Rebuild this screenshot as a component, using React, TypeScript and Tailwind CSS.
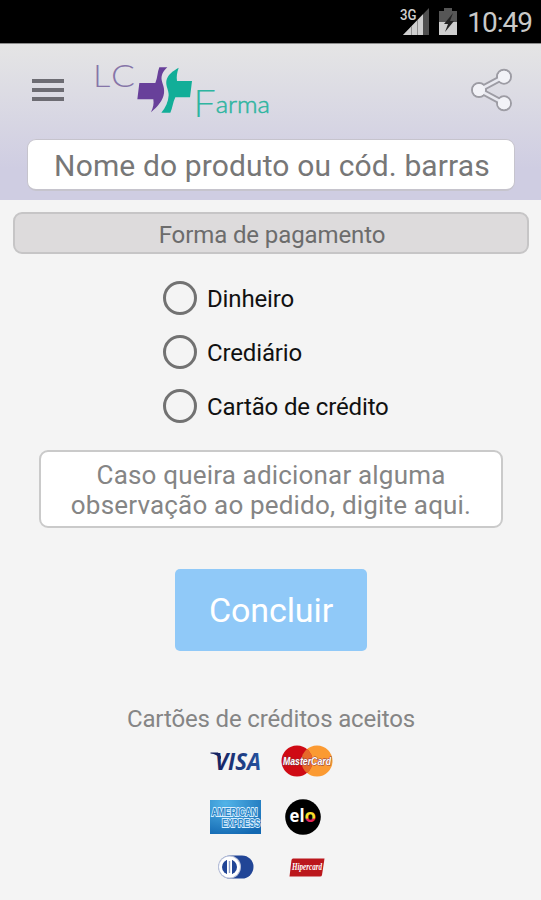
import { useState } from "react";

const payments = ["Dinheiro", "Crediário", "Cartão de crédito"];

function StatusBar() {
  return (
    <div className="flex h-[43px] shrink-0 items-start justify-end bg-black pr-[9px]">
      <svg className="mt-[6px] h-[30px] w-[30px] overflow-visible" viewBox="0 0 30 30">
        <path d="M3 29 29 2V29Z" fill="#4f4f4f" />
        <path d="M3 29 23 8.200V29Z" fill="#cfcfcf" />
        <path d="M11.500 20v9M17.500 14v15" stroke="#8f8f8f" strokeWidth="1" />
        <text x="0" y="13.500" fontFamily="Roboto, sans-serif" fontSize="14.500" fontWeight="500" fill="#d0d0d0" stroke="#000" strokeWidth="2" paintOrder="stroke" textLength="16.500" lengthAdjust="spacingAndGlyphs">3G</text>
      </svg>
      <svg className="mt-[7px] ml-[9px] h-[29px] w-[19px]" viewBox="0 0 19 29">
        <path d="M5 1h8v3h5v11H0V4h5Z" fill="#565656" />
        <path d="M0 15h18v13H0Z" fill="#cfcfcf" />
        <path d="m14 6-9 11h4l-3 8 9-11h-4Z" fill="#222" />
      </svg>
      <span className="mt-[6px] ml-[9px] text-[28px] leading-[33px] tracking-[-1px] text-[#c9c9c9]">10:49</span>
    </div>
  );
}

function Logo() {
  return (
    <svg className="h-[65px] w-[187px] overflow-visible" viewBox="270 51 561 195">
      <g fontFamily="Lato, sans-serif" fontWeight="300">
        <text x="279" y="140" fontSize="94" fill="#8675a8" textLength="52" lengthAdjust="spacingAndGlyphs">L</text>
        <text x="333" y="140" fontSize="94" fill="#8675a8" textLength="72" lengthAdjust="spacingAndGlyphs">C</text>
        <text x="580" y="231" fontSize="110" fill="#2eb5a0" textLength="68" lengthAdjust="spacingAndGlyphs">F</text>
        <text x="647" y="219" fontSize="72" fill="#2eb5a0" stroke="#2eb5a0" strokeWidth="1.500" textLength="163" lengthAdjust="spacingAndGlyphs">arma</text>
      </g>
      <path d="M478 82h24c-13 12-19 24-17 38 3 14 9 22 7 40-3 22-19 40-39 57 7-14 9-26 7-39h-48l6-49h48c7-16 6-32 12-47Z" fill="#68409a" />
      <path d="M536 83c-5 14-7 27-5 40h45l-6 49h-44c-8 16-8 32-15 46h-27c13-15 21-33 22-52 0-17-9-27-7-43 3-18 19-30 37-40Z" fill="#12ae98" />
    </svg>
  );
}

function Header() {
  return (
    <header className="flex h-[157px] shrink-0 flex-col border-t border-[#8c8c8c] bg-linear-to-b from-[#e5e5e5] to-[#cfcde2] to-80%">
      <div className="flex h-[95px] shrink-0 items-start">
        <button aria-label="Menu" className="mt-[35px] ml-8 flex w-8 flex-col gap-[5px]">
          <span className="h-1 bg-[#6d6c73]" />
          <span className="h-1 bg-[#6d6c73]" />
          <span className="h-1 bg-[#6d6c73]" />
        </button>
        <div className="mt-[13px] ml-[26px]">
          <Logo />
        </div>
        <button aria-label="Compartilhar" className="mt-[23px] mr-7 ml-auto">
          <svg className="h-[46px] w-[43px]" viewBox="90 51 129 138">
            <g fill="#f2f2f7" stroke="#9d9ca4">
              <path d="M192 80 117 120 192 160" fill="none" strokeWidth="19" />
              <circle cx="192" cy="80" r="21" strokeWidth="6" />
              <circle cx="117" cy="120" r="21" strokeWidth="6" />
              <circle cx="192" cy="160" r="21" strokeWidth="6" />
              <path d="M192 80 117 120 192 160" fill="none" stroke="#e9e9f0" strokeWidth="8" />
            </g>
            <g fill="#f2f2f7">
              <circle cx="192" cy="80" r="18" />
              <circle cx="117" cy="120" r="18" />
              <circle cx="192" cy="160" r="18" />
            </g>
          </svg>
        </button>
      </div>
      <div className="mr-[26px] ml-[27px] flex h-[52px] items-center justify-center rounded-[9px] border border-b-2 border-[#c6c4cd] bg-white">
        <span className="pt-[2px] pl-[2px] text-[30px] leading-9 tracking-[0.13px] whitespace-nowrap text-[#777]">Nome do produto ou cód. barras</span>
      </div>
    </header>
  );
}

function Visa() {
  return (
    <svg className="h-[19px] w-[52px] overflow-visible" viewBox="0 0 52 19">
      <defs>
        <linearGradient id="visa">
          <stop offset="0" stopColor="#15205f" />
          <stop offset="1" stopColor="#2352a0" />
        </linearGradient>
      </defs>
      <path d="M.5.500h7.500l3 4v3Q7 2 .5 1.500Z" fill="#15205f" />
      <text x="5" y="17.500" fontFamily="Open Sans, sans-serif" fontSize="23" fontWeight="700" fontStyle="italic" fill="url(#visa)" textLength="46" lengthAdjust="spacingAndGlyphs">VISA</text>
    </svg>
  );
}

function MasterCard() {
  return (
    <svg className="h-8 w-[52px] overflow-visible" viewBox="0 0 52 32">
      <circle cx="36" cy="16" r="15.500" fill="#fb9a32" />
      <circle cx="16" cy="16" r="15.500" fill="#cf0a14" />
      <path d="M26 4a15.500 15.500 0 0 1 0 24 15.500 15.500 0 0 1 0-24" fill="#e6692a" />
      <text x="2" y="20" fontFamily="Liberation Sans, sans-serif" fontSize="11" fontWeight="700" fontStyle="italic" fill="#fff" stroke="#8b3440" strokeWidth="1" paintOrder="stroke" textLength="48" lengthAdjust="spacingAndGlyphs">MasterCard</text>
    </svg>
  );
}

function Amex() {
  return (
    <svg className="h-[34px] w-[51px] overflow-visible" viewBox="0 0 51 34">
      <defs>
        <radialGradient id="amex" cx=".3" cy=".1" r="1">
          <stop offset="0" stopColor="#52b4e8" />
          <stop offset="1" stopColor="#1268b2" />
        </radialGradient>
      </defs>
      <path d="M0 0h51v34H0Z" fill="url(#amex)" />
      <g fontFamily="Liberation Sans, sans-serif" fontSize="11" fontWeight="700" fill="#2a86c8" stroke="#d8efff" strokeWidth="1.800" paintOrder="stroke">
        <text x="1.500" y="16" textLength="46" lengthAdjust="spacingAndGlyphs">AMERICAN</text>
        <text x="12" y="27" textLength="38" lengthAdjust="spacingAndGlyphs">EXPRESS</text>
      </g>
    </svg>
  );
}

function Elo() {
  return (
    <svg className="h-9 w-9 overflow-visible" viewBox="0 0 36 36">
      <defs>
        <linearGradient id="elo" x2="0" y2="1">
          <stop offset=".62" stopColor="#f5e12c" />
          <stop offset=".68" stopColor="#e4245c" />
        </linearGradient>
      </defs>
      <circle cx="18" cy="18" r="17.800" fill="#000" />
      <g fontFamily="Open Sans, sans-serif" fontSize="18" fontWeight="700">
        <text x="4.500" y="23" fill="#fff" textLength="15" lengthAdjust="spacingAndGlyphs">el</text>
        <text x="19.500" y="23" fill="url(#elo)" textLength="11.500" lengthAdjust="spacingAndGlyphs">o</text>
      </g>
    </svg>
  );
}

function Diners() {
  return (
    <svg className="h-[24px] w-[36px]" viewBox="0 0 36 24">
      <rect x=".5" y=".5" width="35" height="23" rx="11.500" fill="#214596" />
      <circle cx="11.500" cy="12" r="11.500" fill="#b9c1da" />
      <circle cx="11.500" cy="12" r="10.500" fill="#fff" />
      <circle cx="11.500" cy="12" r="7.500" fill="#214596" />
      <path d="M9 4h5v16H9Z" fill="#fff" />
      <path d="M10.800 6h1.400v12h-1.400Z" fill="#8fa0c8" />
    </svg>
  );
}

function Hipercard() {
  return (
    <svg className="h-[19px] w-[36px] overflow-visible" viewBox="0 0 36 19">
      <path d="M4 .5h31.500L33 17q-.3 1.500-2 1.500H.500L2.500 2Q2.700.500 4 .500Z" fill="#bb171c" />
      <text x="3" y="12" fontFamily="Liberation Serif, serif" fontSize="9.500" fontWeight="700" fontStyle="italic" fill="#fff" textLength="30" lengthAdjust="spacingAndGlyphs">Hipercard</text>
    </svg>
  );
}

export default function App() {
  const [payment, setPayment] = useState<string | null>(null);

  return (
    <div className="flex h-[900px] w-[541px] flex-col overflow-hidden bg-[#f4f4f4] font-[Roboto,sans-serif]">
      <StatusBar />
      <Header />

      <main className="flex flex-col items-center pl-px">
        <h1 className="mt-3 flex h-[42px] w-[516px] items-center justify-center rounded-[9px] border-2 border-[#c6c5c6] bg-[#dddbdc] pt-[3px] pl-[2px] text-[24px] leading-7 tracking-[-0.1px] text-[#6c6c6c]">
          Forma de pagamento
        </h1>

        <div className="mt-[17px] ml-[10px] w-[226px]">
          {payments.map((p) => (
            <button key={p} onClick={() => setPayment(p)} className="flex h-[54px] items-center gap-[10px]">
              <span className="flex size-[34px] items-center justify-center rounded-full border-3 border-[#727272]">
                {payment === p && <span className="size-4 rounded-full bg-[#727272]" />}
              </span>
              <span className="pt-[2px] text-[24px] leading-7 tracking-[-0.14px] whitespace-nowrap text-[#111]">{p}</span>
            </button>
          ))}
        </div>

        <p className="mt-[17px] h-[78px] w-[464px] rounded-[9px] border-2 border-[#cacaca] bg-white pt-[8px] text-center text-[26px] leading-[30px] tracking-[0.18px] whitespace-nowrap text-[#858585]">
          Caso queira adicionar alguma
          <br />
          observação ao pedido, digite aqui.
        </p>

        <button className="mt-[41px] flex h-[82px] w-[192px] items-center justify-center rounded-[5px] bg-[#90c9f8] text-[34px] tracking-[-0.1px] text-white">
          Concluir
        </button>

        <h2 className="mt-[54px] text-[24px] leading-7 tracking-[-0.15px] text-[#858585]">Cartões de créditos aceitos</h2>
        <div className="mt-[3px] ml-px grid grid-cols-[52px_52px] gap-x-[19px]">
          <div className="flex h-[50px] items-center justify-center"><Visa /></div>
          <div className="flex h-[50px] items-center justify-center"><MasterCard /></div>
          <div className="flex h-[61px] items-center justify-start"><Amex /></div>
          <div className="flex h-[61px] items-center justify-start pl-[4px]"><Elo /></div>
          <div className="flex h-[40px] items-center justify-center"><Diners /></div>
          <div className="flex h-[40px] items-center justify-center"><Hipercard /></div>
        </div>
      </main>
    </div>
  );
}
